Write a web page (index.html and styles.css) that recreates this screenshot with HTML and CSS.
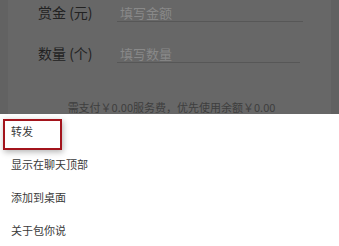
FILE: index.html
```html
<!DOCTYPE html>
<html lang="zh-CN">
<head>
<meta charset="utf-8">
<link rel="stylesheet" href="styles.css">
</head>
<body>
<div class="page">
  <div class="form">
    <div class="row">
      <div class="label">赏金 (元)</div>
      <div class="input">填写金额</div>
    </div>
    <div class="row row2">
      <div class="label">数量 (个)</div>
      <div class="input short">填写数量</div>
    </div>
    <div class="note">需支付￥0.00服务费，优先使用余额￥0.00</div>
  </div>
  <div class="sheet">
    <div class="item">转发</div>
    <div class="item">显示在聊天顶部</div>
    <div class="item">添加到桌面</div>
    <div class="item">关于包你说</div>
    <div class="highlight"></div>
  </div>
</div>
</body>
</html>
```

FILE: styles.css
```css
* { box-sizing: border-box; }
html, body { margin: 0; padding: 0; }
body {
  width: 339px;
  height: 246px;
  overflow: hidden;
  font-family: "Noto Sans CJK SC", "Noto Sans", sans-serif;
  background: #676767;
}
.page {
  display: flex;
  flex-direction: column;
  height: 246px;
}
.form {
  height: 116px;
  background: #676767;
  border-left: 8px solid #626262;
  border-right: 8px solid #616161;
  padding: 4px 0 0 30px;
  display: flex;
  flex-direction: column;
}
.row {
  display: flex;
  align-items: flex-end;
  height: 18px;
}
.row2 { margin-top: 23px; }
.label {
  width: 79px;
  font-size: 14px;
  line-height: 17px;
  color: #222222;
  padding-bottom: 1px;
}
.input {
  width: 186px;
  height: 18px;
  border-bottom: 1px solid #575757;
  font-size: 13px;
  line-height: 17px;
  color: #898989;
  padding-left: 3px;
}
.input.short { width: 183px; }
.note {
  margin-top: 37px;
  margin-left: -30px;
  text-align: center;
  font-size: 11px;
  line-height: 14px;
  color: #3e3e3e;
  padding-left: 4px;
}
.sheet {
  position: relative;
  flex: 1;
  background: #ffffff;
  padding-top: 1px;
}
.item {
  height: 33px;
  line-height: 33px;
  padding-left: 11px;
  font-size: 11px;
  color: #3a3a3a;
}
.highlight {
  position: absolute;
  left: 3px;
  top: 5px;
  width: 59px;
  height: 31px;
  border: 2px solid #a3141c;
  box-shadow: 1px 2px 6px rgba(0,0,0,0.3);
}
```
